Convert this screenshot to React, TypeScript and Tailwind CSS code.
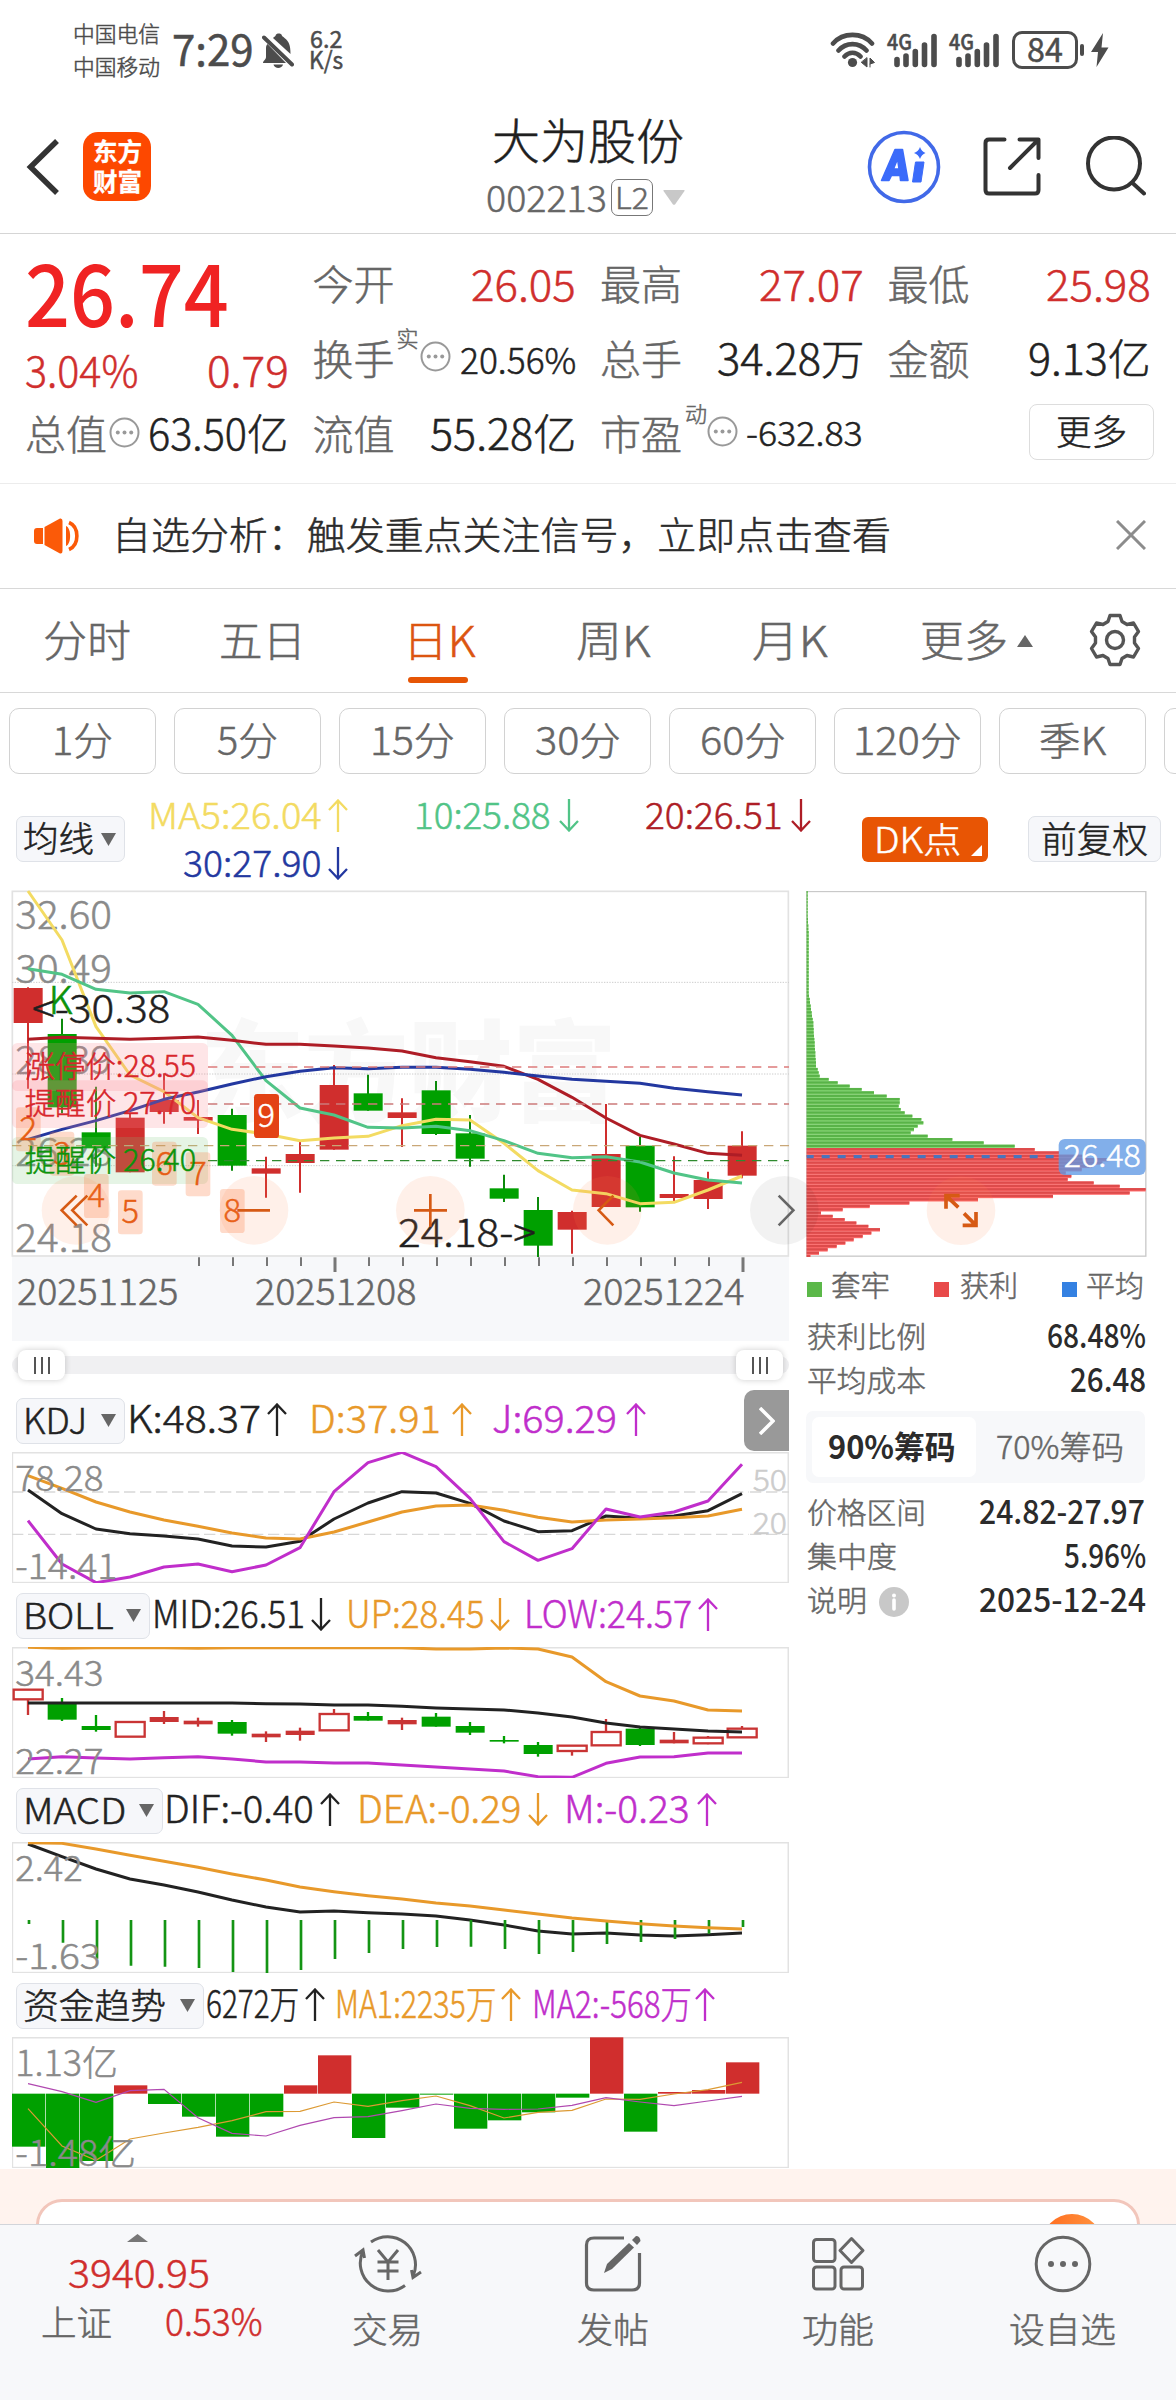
import { useLayoutEffect, useRef, useState, type ReactNode } from "react";

/* Single line of text that is condensed or expanded to the width of its box. */
function Fit({ className = "", children }: { className?: string; children: ReactNode }) {
  const box = useRef<HTMLSpanElement>(null);
  const text = useRef<HTMLSpanElement>(null);
  const [scale, setScale] = useState(1);
  useLayoutEffect(() => {
    if (box.current && text.current && text.current.offsetWidth) {
      setScale(box.current.offsetWidth / text.current.offsetWidth);
    }
  }, []);
  return (
    <span ref={box} className={"inline-block shrink-0 whitespace-nowrap leading-none " + className}>
      <span ref={text} className="inline-block origin-left" style={{ transform: `scaleX(${scale})` }}>
        {children}
      </span>
    </span>
  );
}

const RED = "#d02e2d";
const GREEN = "#00a000";
const DOWN_DARK = "#0b8a0b";
const ORANGE = "#e8992a";
const PURPLE = "#c02ecb";
const BLACK = "#222222";

const cx = (i: number) => 84 + 102 * i;
const line = (ys: number[]) => ys.map((y, i) => `${cx(i)},${y}`).join(" ");

function Dots() {
  return (
    <svg className="h-[31px] w-[31px] shrink-0" viewBox="0 0 31 31" fill="none" stroke="#999" strokeWidth="2">
      <circle cx="15.5" cy="15.5" r="14" />
      <g fill="#999" stroke="none">
        <circle cx="8.8" cy="15.5" r="2" />
        <circle cx="15.5" cy="15.5" r="2" />
        <circle cx="22.2" cy="15.5" r="2" />
      </g>
    </svg>
  );
}

function Arrow({ down = false, className = "" }: { down?: boolean; className?: string }) {
  return (
    <svg className={"h-[33px] w-[20px] shrink-0 " + className} viewBox="0 0 20 33" fill="none" stroke="currentColor" strokeWidth="2.3">
      {down ? <path d="M10 0V31.5M1 22L10 31.5L19 22" /> : <path d="M10 33V1.5M1 11L10 1.5L19 11" />}
    </svg>
  );
}

function Signal() {
  return (
    <span className="relative h-[35px] w-[51px] shrink-0">
      <Fit className="absolute left-0 top-[-4px] w-[25px] text-[22px] font-medium">4G</Fit>
      <svg className="absolute left-0 top-0 h-[35px] w-[51px]" viewBox="0 0 51 35" stroke="#4c4c4c" strokeWidth="5.6" strokeLinecap="round">
        <path d="M10 26.5V31.5M19 23V31.5M28.3 18.5V31.5M37.5 12V31.5M47 3.5V31.5" />
      </svg>
    </span>
  );
}

function StatusBar() {
  return (
    <div className="flex h-[100px] items-center pl-[73px] text-[#4c4c4c]">
      <div className="mt-[-4px] flex flex-col gap-[11px]">
        <Fit className="w-[87px] text-[22px]">中国电信</Fit>
        <Fit className="w-[87px] text-[22px]">中国移动</Fit>
      </div>
      <Fit className="ml-[12px] mt-[-6px] w-[82px] text-[43px] font-normal">7:29</Fit>
      <svg className="ml-[8px] h-[35px] w-[32px]" viewBox="0 0 32 35">
        <path d="M5.5 11 L24 30 H1 C1 27.5 4 27 4 24 V15 C4 13 4.500 12 5.500 11Z" fill="#4c4c4c" />
        <path d="M11 5 C12.500 3.500 13.500 3.400 14 1.500 C15 0 18.500 0 19.500 1.500 C20 3.500 21 3.500 22.500 5 C27 8.500 28.500 12 28.500 21Z" fill="#4c4c4c" />
        <path d="M2 4.500L30 31.500" stroke="#4c4c4c" strokeWidth="4" strokeLinecap="round" />
        <path d="M11.500 31.500H21C20 36 12.500 36 11.500 31.500Z" fill="#4c4c4c" />
      </svg>
      <div className="ml-[15px] mt-[-4px] flex flex-col items-center font-normal">
        <Fit className="w-[32px] text-[24px]">6.2</Fit>
        <Fit className="mt-[-3px] w-[34px] text-[24px]">K/s</Fit>
      </div>
      <svg className="ml-[487px] h-[38px] w-[46px]" viewBox="0 0 46 38" fill="none" stroke="#4c4c4c" strokeWidth="4.600" strokeLinecap="round">
        <path d="M3 12.500C13 1 32 1 42 12.500M8.500 19.500C16 11 29 11 36.500 19.500M14.500 25.500C19 20.500 26 20.500 30.500 25.500" />
        <circle cx="22.500" cy="31.500" r="4.600" fill="#4c4c4c" stroke="none" />
        <path d="M37 27V36L31.500 31.500ZM40 36V27L44.500 31.500L40 33" fill="#4c4c4c" strokeWidth="1" />
      </svg>
      <div className="ml-[11px] flex gap-[11px]">
        <Signal />
        <Signal />
      </div>
      <div className="ml-[12px] flex h-[38px] w-[66px] items-center justify-center rounded-[10px] border-[3px] border-[#4c4c4c]">
        <Fit className="mt-[-5px] w-[36px] text-[34px] font-normal">84</Fit>
      </div>
      <span className="ml-[2px] h-[12px] w-[4px] rounded-sm bg-[#4c4c4c]" />
      <svg className="ml-[7px] h-[34px] w-[18px]" viewBox="0 0 18 34" fill="#4c4c4c">
        <path d="M12 0L0 19H7L5.500 34L17.500 14.500H10.500Z" />
      </svg>
    </div>
  );
}

function Header() {
  return (
    <div className="flex h-[134px] border-b border-[#d5d5d5]">
      <svg className="ml-[26px] mt-[39px] h-[56px] w-[34px] shrink-0" viewBox="0 0 34 56" fill="none" stroke="#333" strokeWidth="5.500">
        <path d="M31 2L4.500 28L31 54" />
      </svg>
      <div className="ml-[23px] mt-[32px] flex h-[69px] w-[68px] shrink-0 flex-col items-center justify-center rounded-[15px] bg-[#fd4800] text-[25px] font-bold text-white [-webkit-text-stroke:0.3px]">
        <Fit className="mt-[-3px] w-[49px]">东方</Fit>
        <Fit className="mt-[5px] w-[49px]">财富</Fit>
      </div>
      <div className="ml-[334px] flex w-[203px] flex-col pt-[14px]">
        <Fit className="ml-[7px] w-[192px] text-[48px] text-[#1f1f1f]">大为股份</Fit>
        <div className="mt-[17px] flex items-center text-[#666]">
          <Fit className="ml-[1px] mt-[-2px] w-[121px] text-[37px]">002213</Fit>
          <span className="ml-[4px] flex h-[37px] w-[42px] items-center justify-center rounded-[7px] border border-[#777]">
            <Fit className="mt-[-4px] w-[34px] text-[30px]">L2</Fit>
          </span>
          <svg className="ml-[10px] h-[15px] w-[22px]" viewBox="0 0 22 15" fill="#c8c8c8">
            <path d="M1 0H21Q22 0 21.500 1L12 14.500Q11 15 10 14.500L0.500 1Q0 0 1 0Z" />
          </svg>
        </div>
      </div>
      <svg className="ml-[179px] mt-[30px] h-[74px] w-[74px] shrink-0" viewBox="0 0 74 74">
        <circle cx="37" cy="37" r="34.500" fill="none" stroke="#4169e8" strokeWidth="3.600" />
        <path d="M28 19.500H35.500L41 50.500H33.500L33 45.500H24.500L22 50.500H14.500ZM30.500 29L26.500 39H32Z" fill="#3b6bfa" stroke="#3b6bfa" strokeWidth="1.500" strokeLinejoin="round" fillRule="evenodd" />
        <path d="M48.500 32H57L54 52H45.500Z" fill="#3b6bfa" stroke="#3b6bfa" strokeLinejoin="round" />
        <path d="M53 17Q54.500 21.500 58.500 23Q54.500 24.500 53 29Q51.500 24.500 47 23Q51.500 21.500 53 17Z" fill="#3b6bfa" />
      </svg>
      <svg className="ml-[41px] mt-[36px] h-[60px] w-[60px] shrink-0" viewBox="0 0 60 60" fill="none" stroke="#333" strokeWidth="4" strokeLinecap="round" strokeLinejoin="round">
        <path d="M22.500 3.500H7Q3.500 3.500 3.500 7V54Q3.500 57.500 7 57.500H53Q56.500 57.500 56.500 54V39M37.500 3.500H56.500V22M56 4L28 32" />
      </svg>
      <svg className="ml-[44px] mt-[36px] h-[60px] w-[60px] shrink-0" viewBox="0 0 60 60" fill="none" stroke="#333" strokeWidth="4" strokeLinecap="round">
        <circle cx="28" cy="27.500" r="26" />
        <path d="M46.500 47L58 57.500" />
      </svg>
    </div>
  );
}

const cell = "flex h-[75px] items-center justify-between";
const label = "mt-[-3px] w-[82px] text-[41px] text-[#666]";
const high = "mt-[-3px] w-[105px] text-[43px] text-[#d02e2d]";

function Quote() {
  return (
    <div className="grid h-[250px] grid-cols-4 gap-6 border-b border-[#ececec] px-[25px] pt-[12px]">
      <div>
        <div className="flex h-[100px] items-center">
          <Fit className="mt-[-12px] w-[204px] text-[86px] font-medium text-[#f02323] [-webkit-text-stroke:0]">26.74</Fit>
        </div>
        <div className="flex h-[50px] items-center justify-between text-[43px] text-[#d02e2d]">
          <Fit className="mt-[-5px] w-[113px]">3.04%</Fit>
          <Fit className="mt-[-5px] w-[82px]">0.79</Fit>
        </div>
        <div className="flex h-[75px] items-center">
          <Fit className={label}>总值</Fit>
          <span className="ml-[2px] mt-[-3px]"><Dots /></span>
          <Fit className="ml-[8px] mt-[-3px] w-[140px] text-[42px] text-[#222]">63.50亿</Fit>
        </div>
      </div>
      <div>
        <div className={cell}>
          <Fit className={label}>今开</Fit>
          <Fit className={high}>26.05</Fit>
        </div>
        <div className="flex h-[75px] items-center">
          <Fit className={label}>换手</Fit>
          <Fit className="ml-[2px] mt-[5px] w-[22px] self-start text-[22px] text-[#666]">实</Fit>
          <span className="ml-[1px] mt-[-5px]"><Dots /></span>
          <Fit className="ml-[9px] mt-[-2px] w-[116px] text-[36px] text-[#222]">20.56%</Fit>
        </div>
        <div className={cell}>
          <Fit className={label}>流值</Fit>
          <Fit className="mt-[-3px] w-[146px] text-[42px] text-[#222]">55.28亿</Fit>
        </div>
      </div>
      <div>
        <div className={cell}>
          <Fit className={label}>最高</Fit>
          <Fit className={high}>27.07</Fit>
        </div>
        <div className={cell}>
          <Fit className={label}>总手</Fit>
          <Fit className="mt-[-3px] w-[147px] text-[42px] text-[#222]">34.28万</Fit>
        </div>
        <div className="flex h-[75px] items-center">
          <Fit className={label}>市盈</Fit>
          <Fit className="ml-[3px] mt-[5px] w-[22px] self-start text-[22px] text-[#666]">动</Fit>
          <span className="mt-[-4px]"><Dots /></span>
          <Fit className="ml-[8px] mt-[-3px] w-[117px] text-[34px] text-[#222]">-632.83</Fit>
        </div>
      </div>
      <div>
        <div className={cell}>
          <Fit className={label}>最低</Fit>
          <Fit className={high}>25.98</Fit>
        </div>
        <div className={cell}>
          <Fit className={label}>金额</Fit>
          <Fit className="mt-[-3px] w-[123px] text-[42px] text-[#222]">9.13亿</Fit>
        </div>
        <div className="flex h-[75px] items-center justify-end">
          <span className="mr-[-3px] mt-[-3px] flex h-[56px] w-[125px] items-center justify-center rounded-[8px] border border-[#ddd]">
            <Fit className="mt-[-5px] w-[71px] text-[35px] text-[#222]">更多</Fit>
          </span>
        </div>
      </div>
    </div>
  );
}

function Notice() {
  return (
    <div className="flex h-[105px] items-center border-b border-[#d8d8d8] pl-[33px]">
      <svg className="h-[36px] w-[46px]" viewBox="0 0 46 36" fill="#fb5a08">
        <path d="M4 10H10V26H4Q1 26 1 23V13Q1 10 4 10Z" />
        <path d="M11.500 9L27 0.500Q29.500 0 29.500 3V33Q29.500 36 27 35.500L11.500 27Z" />
        <path d="M33 8C38.500 10 38.500 26 33 28Z" />
        <path d="M36 4.500C46.500 9 46.500 27 36 31.500" fill="none" stroke="#fb5a08" strokeWidth="3.600" />
      </svg>
      <Fit className="ml-[33px] mt-[-6px] w-[779px] text-[38px] text-[#2b2b2b]">自选分析：触发重点关注信号，立即点击查看</Fit>
      <svg className="ml-[225px] mt-[-2px] h-[30px] w-[30px]" viewBox="0 0 30 30" stroke="#8c8c8c" strokeWidth="3">
        <path d="M1 1L29 29M29 1L1 29" />
      </svg>
    </div>
  );
}

function Tabs() {
  return (
    <div className="flex h-[104px] items-center border-b border-[#d8d8d8] pl-[43px] text-[43px] text-[#666]">
      <Fit className="mt-[-4px] w-[88px]">分时</Fit>
      <Fit className="ml-[88px] mt-[-4px] w-[87px]">五日</Fit>
      <div className="relative ml-[97px] mt-[-4px] text-[#dc5510]">
        <Fit className="w-[73px]">日K</Fit>
        <span className="absolute left-[5px] top-[71px] h-[6px] w-[60px] rounded-full bg-[#e65505]" />
      </div>
      <Fit className="ml-[100px] mt-[-4px] w-[75px]">周K</Fit>
      <Fit className="ml-[101px] mt-[-4px] w-[76px]">月K</Fit>
      <Fit className="ml-[92px] mt-[-4px] w-[88px]">更多</Fit>
      <svg className="ml-[9px] h-[12px] w-[16px]" viewBox="0 0 16 12" fill="#666"><path d="M8 0L16 12H0Z" /></svg>
      <svg className="ml-[56px] mt-[-1px] h-[54px] w-[52px]" viewBox="0 0 52 54" fill="none" stroke="#555" strokeWidth="3.400" strokeLinejoin="round">
        <path d="M21 2.500H31L33 8.500L38 11.500L44.500 10L49.500 18.500L45.500 24V30L49.500 35.500L44.500 44L38 42.500L33 45.500L31 51.500H21L19 45.500L14 42.500L7.500 44L2.500 35.500L6.500 30V24L2.500 18.500L7.500 10L14 11.500L19 8.500Z" />
        <circle cx="26" cy="27" r="8.500" />
      </svg>
    </div>
  );
}

function Periods() {
  const b = "flex h-[66px] w-[147px] shrink-0 items-center justify-center rounded-[10px] border-[1.5px] border-[#d2d2d2]";
  return (
    <div className="flex h-[97px] gap-[18px] overflow-hidden pl-[9px] pt-[15px] text-[39px] text-[#666]">
      <div className={b}><Fit className="mt-[-5px] w-[61px]">1分</Fit></div>
      <div className={b}><Fit className="mt-[-5px] w-[61px]">5分</Fit></div>
      <div className={b}><Fit className="mt-[-5px] w-[85px]">15分</Fit></div>
      <div className={b}><Fit className="mt-[-5px] w-[86px]">30分</Fit></div>
      <div className={b}><Fit className="mt-[-5px] w-[86px]">60分</Fit></div>
      <div className={b}><Fit className="mt-[-5px] w-[109px]">120分</Fit></div>
      <div className={b}><Fit className="mt-[-5px] w-[67px]">季K</Fit></div>
      <div className={b} />
    </div>
  );
}

function Chip({ width, text, textWidth }: { width: string; text: string; textWidth: string }) {
  return (
    <span className={"flex h-[46px] shrink-0 items-center justify-between rounded-[7px] border-[1.5px] border-[#dfe2e8] bg-[#f6f7fa] pl-[6px] pr-[8px] " + width}>
      <Fit className={"mt-[-5px] text-[35px] text-[#222] " + textWidth}>{text}</Fit>
      <svg className="h-[13px] w-[15px]" viewBox="0 0 15 13" fill="#666"><path d="M0 0H15L7.500 13Z" /></svg>
    </span>
  );
}

function Averages() {
  return (
    <div className="flex h-[101px] pl-[16px] text-[36px]">
      <div className="pt-[26px]"><Chip width="w-[109px]" text="均线" textWidth="w-[71px]" /></div>
      <div className="ml-[23px] w-[690px] shrink-0 pt-[7px]">
        <div className="flex h-[38px] items-center">
          <Fit className="mt-[-7px] w-[174px] text-[#f3db62]">MA5:26.04</Fit>
          <Arrow className="ml-[6px] mt-[-2px] text-[#f3db62]" />
          <Fit className="ml-[66px] mt-[-7px] w-[137px] text-[#51c487]">10:25.88</Fit>
          <Arrow down className="ml-[8px] mt-[-2px] text-[#51c487]" />
          <Fit className="ml-[66px] mt-[-7px] w-[138px] text-[#ae1d26]">20:26.51</Fit>
          <Arrow down className="ml-[8px] mt-[-2px] text-[#ae1d26]" />
        </div>
        <div className="mt-[10px] flex h-[38px] items-center pl-[35px] text-[#2338a0]">
          <Fit className="mt-[-7px] w-[139px]">30:27.90</Fit>
          <Arrow down className="ml-[6px] mt-[-2px]" />
        </div>
      </div>
      <div className="relative ml-[24px] mt-[27px] flex h-[45px] w-[126px] shrink-0 items-center rounded-[6px] bg-[#e85504] pl-[12px] text-white">
        <Fit className="mt-[-5px] w-[87px] text-[35px]">DK点</Fit>
        <svg className="absolute bottom-[6px] right-[6px] h-[11px] w-[11px]" viewBox="0 0 11 11" fill="#fff"><path d="M11 0V11H0Z" /></svg>
      </div>
      <div className="ml-[40px] mt-[26px] flex h-[46px] w-[133px] shrink-0 items-center justify-center rounded-[7px] border-[1.5px] border-[#dfe2e8] bg-[#f6f7fa] text-[#222]">
        <Fit className="mt-[-5px] w-[107px] text-[36px]">前复权</Fit>
      </div>
    </div>
  );
}

/* top, bottom, high, low, rising */
type Candle = [number, number, number, number, boolean];
const candles: Candle[] = [
  [324, 429, 322, 626, true], [462, 682, 416, 700, false], [757, 805, 620, 860, false], [713, 877, 700, 877, true],
  [660, 696, 580, 731, true], [711, 722, 660, 762, true], [705, 857, 686, 872, false], [865, 881, 830, 953, true],
  [822, 849, 786, 938, true], [615, 809, 555, 809, true], [640, 692, 584, 692, false], [697, 714, 655, 801, true],
  [631, 762, 603, 765, false], [760, 836, 705, 860, false], [925, 956, 884, 966, false], [990, 1097, 951, 1131, false],
  [996, 1049, 992, 1121, true], [822, 981, 672, 981, true], [797, 982, 770, 995, false], [942, 954, 829, 963, true],
  [900, 957, 875, 987, true], [797, 887, 754, 895, true],
];
const ma5 = [33, 180, 440, 585, 635, 713, 748, 762, 782, 774, 769, 737, 718, 720, 790, 872, 930, 941, 971, 967, 930, 888];
const ma10 = [266, 283, 328, 339, 335, 373, 466, 602, 684, 705, 742, 744, 739, 752, 782, 820, 833, 830, 846, 879, 900, 909];
const ma20 = [478, 472, 475, 478, 475, 471, 481, 493, 493, 498, 504, 513, 533, 545, 559, 598, 652, 714, 766, 792, 820, 826];
const ma30 = [778, 748, 722, 692, 658, 636, 612, 590, 574, 563, 566, 562, 562, 568, 577, 588, 598, 604, 610, 625, 635, 645];
const marks: [string, number, number][] = [
  ["2", 48, 682], ["3", 149, 755], ["4", 252, 882], ["5", 354, 931], ["6", 456, 785], ["7", 557, 817], ["8", 660, 927],
];

function MainChart() {
  return (
    <svg className="relative z-10 block h-[366px] w-[777px] overflow-visible" viewBox="36 33 2331 1098">
      <rect x="37" y="34" width="2328" height="1094" fill="none" stroke="#e2e2e2" strokeWidth="5" />
      <text x="600" y="700" textLength="1250" lengthAdjust="spacingAndGlyphs" fontSize="330" fontWeight="900" fill="#f8f8f8">东方财富</text>
      <path d="M36 307H2367M36 582H2367M36 857H2367" stroke="#ccc" strokeWidth="3" strokeDasharray="4 4" />
      <g fontSize="118" fill="#8a8a8a" stroke="#8a8a8a" strokeWidth="1.500">
        <text x="46" y="147" textLength="290" lengthAdjust="spacingAndGlyphs">32.60</text>
        <text x="46" y="308" textLength="290" lengthAdjust="spacingAndGlyphs">30.49</text>
        <text x="46" y="582" textLength="290" lengthAdjust="spacingAndGlyphs">28.39</text>
        <text x="46" y="857" textLength="290" lengthAdjust="spacingAndGlyphs">26.28</text>
        <text x="46" y="1117" textLength="290" lengthAdjust="spacingAndGlyphs">24.18</text>
      </g>
      {candles.map(([t, b, h, l, up], i) => (
        <g key={i} fill={up ? RED : GREEN} stroke={up ? RED : DOWN_DARK}>
          <path d={`M${cx(i)} ${h}V${l}`} strokeWidth="6" />
          <rect x={cx(i) - 43} y={t} width="87" height={b - t} stroke="none" />
        </g>
      ))}
      <g fill="none" strokeWidth="9" strokeLinejoin="round">
        <polyline points={line(ma5)} stroke="#f3db62" />
        <polyline points={line(ma10)} stroke="#51c487" />
        <polyline points={line(ma20)} stroke="#ae1d26" />
        <polyline points={line(ma30)} stroke="#2338a0" />
      </g>
      <g strokeWidth="4" strokeDasharray="28 20" fill="none">
        <path d="M624 561H2367" stroke="#dd7b7b" />
        <path d="M624 672H2367" stroke="#cc7a7a" />
        <path d="M36 797H2367" stroke="#c9a777" />
        <path d="M624 842H2367" stroke="#2f8a2f" />
      </g>
      <rect x="36" y="489" width="588" height="144" rx="16" fill="#fa8a90" fillOpacity="0.22" />
      <rect x="36" y="601" width="588" height="143" rx="16" fill="#fa8a90" fillOpacity="0.22" />
      <rect x="36" y="771" width="588" height="141" rx="16" fill="#7cc97c" fillOpacity="0.2" />
      {marks.map(([n, x, y]) => (
        <g key={n}>
          <rect x={x} y={y} width="74" height="132" rx="10" fill="#fb7d43" fillOpacity="0.28" />
          <text x={x + 37} y={y + 99} textAnchor="middle" fontSize="98" fill="#e65d14" stroke="#e65d14" strokeWidth="1.500">{n}</text>
        </g>
      ))}
      <rect x="762" y="642" width="75" height="132" rx="10" fill="#e34214" />
      <text x="799" y="740" textAnchor="middle" fontSize="98" fill="#fff" stroke="#fff" strokeWidth="1.500">9</text>
      <g fontSize="90" fill="#d8262c" stroke="#d8262c" strokeWidth="1.500">
        <text x="74" y="590" textLength="514" lengthAdjust="spacingAndGlyphs">涨停价:28.55</text>
        <text x="74" y="702" textLength="514" lengthAdjust="spacingAndGlyphs">提醒价 27.70</text>
        <text x="74" y="873" textLength="514" lengthAdjust="spacingAndGlyphs" fill="#0b930b" stroke="#0b930b">提醒价 26.40</text>
      </g>
      <text x="146" y="401" fontSize="114" fill="#0b930b" stroke="#0b930b" strokeWidth="2">K</text>
      <g fontSize="118" fill="#1f1f1f" stroke="#1f1f1f" strokeWidth="1.500">
        <text x="96" y="430" textLength="415" lengthAdjust="spacingAndGlyphs">&lt;-30.38</text>
        <text x="1194" y="1102" textLength="414" lengthAdjust="spacingAndGlyphs">24.18-&gt;</text>
      </g>
      <g fill="#fb874a" fillOpacity="0.12">
        <circle cx="228" cy="991" r="103" />
        <circle cx="762" cy="991" r="103" />
        <circle cx="1291" cy="991" r="103" />
        <circle cx="1822" cy="991" r="103" />
        <circle cx="2353" cy="991" r="103" fill="#000" fillOpacity="0.05" />
      </g>
      <g fill="none" stroke="#d65a14" strokeWidth="8">
        <path d="M230 947L185 991L230 1036M262 947L217 991L262 1036" />
        <path d="M712 991H810M1242 991H1341M1291 942V1040" />
        <path d="M1840 947L1796 991L1840 1036" />
        <path d="M2336 947L2380 991L2336 1036" stroke="#666" />
      </g>
    </svg>
  );
}

function DateAxis() {
  return (
    <div className="h-[84px] w-[777px] bg-[#f7f8fa] text-[37px] text-[#666]">
      <svg className="block h-[16px] w-[777px]" viewBox="36 0 2331 48" stroke="#777" strokeWidth="6">
        {candles.slice(5).map((_, i) => (
          <path key={i} d={`M${cx(i + 5) + 3} 1V${i === 4 || i === 16 ? 45 : 27}`} strokeWidth={i === 4 || i === 16 ? 9 : 6} />
        ))}
      </svg>
      <div className="mt-[-2px] flex pl-[5px]">
        <Fit className="w-[161px]">20251125</Fit>
        <Fit className="ml-[77px] w-[161px]">20251208</Fit>
        <Fit className="ml-[167px] w-[161px]">20251224</Fit>
      </div>
    </div>
  );
}

function Handle() {
  return (
    <span className="flex h-[30px] w-[47px] items-center justify-center gap-[5px] rounded-[8px] bg-white shadow-[0_0_6px_rgba(0,0,0,0.2)]">
      <i className="h-[17px] w-[2px] bg-[#555]" />
      <i className="h-[17px] w-[2px] bg-[#555]" />
      <i className="h-[17px] w-[2px] bg-[#555]" />
    </span>
  );
}

function Frame({ children }: { children: ReactNode }) {
  return (
    <svg className="block h-[131px] w-[777px]" viewBox="36 0 2331 393">
      <rect x="37" y="2" width="2328" height="390" fill="none" stroke="#e2e2e2" strokeWidth="5" />
      {children}
    </svg>
  );
}

function ScaleText({ y, width, children }: { y: number; width: number; children: ReactNode }) {
  return (
    <text x="46" y={y} textLength={width} lengthAdjust="spacingAndGlyphs" fontSize="107" fill="#8a8a8a" stroke="#8a8a8a" strokeWidth="1.500">{children}</text>
  );
}

const jLine = [572, 702, 758, 741, 711, 702, 725, 705, 653, 485, 398, 367, 410, 505, 635, 691, 656, 537, 561, 546, 513, 403];
const kLine = [480, 551, 597, 611, 618, 627, 648, 651, 634, 567, 519, 485, 489, 520, 573, 605, 602, 558, 565, 558, 542, 491];
const dLine = [437, 475, 516, 546, 570, 589, 609, 624, 627, 606, 576, 546, 528, 525, 541, 562, 576, 570, 567, 563, 558, 538];

function Kdj() {
  return (
    <Frame>
      <g transform="translate(0 -366)">
        <path d="M36 486H2246M36 613H2246" stroke="#d8d8d8" strokeWidth="4" strokeDasharray="34 14" />
        <path d="M2250 486H2367M2250 613H2367" stroke="#d8d8d8" strokeWidth="4" strokeDasharray="34 14" />
        <g fontSize="88" fill="#ccc" stroke="#ccc" strokeWidth="1.500">
          <text x="2258" y="484" textLength="103" lengthAdjust="spacingAndGlyphs">50</text>
          <text x="2258" y="611" textLength="103" lengthAdjust="spacingAndGlyphs">20</text>
        </g>
        <g fill="none" strokeWidth="9" strokeLinejoin="round">
          <polyline points={line(kLine)} stroke={BLACK} />
          <polyline points={line(dLine)} stroke={ORANGE} />
          <polyline points={line(jLine)} stroke={PURPLE} />
        </g>
        <ScaleText y={483} width={264}>78.28</ScaleText>
        <ScaleText y={746} width={306}>-14.41</ScaleText>
      </g>
    </Frame>
  );
}

const bollUp = [952, 955, 953, 953, 953, 955, 953, 953, 953, 953, 953, 953, 957, 957, 954, 957, 981, 1055, 1098, 1113, 1140, 1143];
const bollMid = [1119, 1119, 1119, 1119, 1119, 1119, 1119, 1121, 1122, 1125, 1125, 1129, 1134, 1137, 1140, 1149, 1161, 1179, 1191, 1197, 1203, 1206];
const bollLow = [1287, 1280, 1284, 1287, 1283, 1280, 1287, 1296, 1296, 1299, 1299, 1305, 1311, 1317, 1323, 1340, 1342, 1300, 1281, 1280, 1269, 1269];
const bollCandles: Candle[] = [
  [1079, 1108, 1079, 1155, true], [1117, 1169, 1104, 1173, false], [1188, 1200, 1155, 1205, false], [1176, 1220, 1176, 1220, true],
  [1161, 1176, 1143, 1182, true], [1172, 1183, 1163, 1190, true], [1176, 1211, 1170, 1217, false], [1211, 1222, 1204, 1236, true],
  [1202, 1215, 1193, 1232, true], [1152, 1201, 1137, 1201, true], [1158, 1172, 1146, 1172, false], [1170, 1183, 1163, 1200, true],
  [1160, 1190, 1149, 1190, false], [1188, 1208, 1176, 1215, false], [1230, 1235, 1218, 1240, false], [1245, 1272, 1236, 1280, false],
  [1247, 1263, 1247, 1277, true], [1206, 1246, 1167, 1246, true], [1196, 1245, 1192, 1248, false], [1229, 1240, 1206, 1240, true],
  [1223, 1240, 1218, 1243, true], [1196, 1222, 1188, 1222, true],
];

function Boll() {
  return (
    <Frame>
      <g transform="translate(0 -951)">
        {bollCandles.map(([t, b, h, l, up], i) => {
          const hollow = up && b - t > 15.5;
          const color = up ? "#c93434" : GREEN;
          return (
            <g key={i} stroke={color} strokeWidth="7">
              <path d={hollow ? `M${cx(i)} ${h}V${t}M${cx(i)} ${b}V${l}` : `M${cx(i)} ${h}V${l}`} />
              {hollow ? (
                <rect x={cx(i) - 43} y={t} width="87" height={b - t} fill="#fff" />
              ) : (
                <rect x={cx(i) - 43} y={t} width="87" height={b - t} fill={color} stroke="none" />
              )}
            </g>
          );
        })}
        <g fill="none" strokeWidth="9" strokeLinejoin="round">
          <polyline points={line(bollMid)} stroke={BLACK} />
          <polyline points={line(bollUp)} stroke={ORANGE} />
          <polyline points={line(bollLow)} stroke={PURPLE} />
        </g>
        <ScaleText y={1067} width={264}>34.43</ScaleText>
        <ScaleText y={1331} width={264}>22.27</ScaleText>
      </g>
    </Frame>
  );
}

const dea = [248, 250, 267, 286, 304, 322, 342, 360, 381, 395, 407, 417, 429, 438, 450, 462, 474, 483, 491, 498, 503, 507];
const dif = [252, 290, 327, 357, 375, 396, 420, 441, 456, 453, 458, 462, 468, 480, 495, 513, 522, 519, 525, 528, 524, 519];
const macdBars = [492, 548, 596, 617, 620, 624, 636, 639, 630, 597, 579, 567, 561, 560, 567, 582, 576, 552, 546, 537, 521, 501];

function Macd() {
  return (
    <Frame>
      <g transform="translate(0 -246)">
        <polyline points={line(dif)} fill="none" stroke={BLACK} strokeWidth="9" />
        <path d={macdBars.map((y, i) => `M${cx(i) + 3} 480V${y}`).join("")} stroke="#149414" strokeWidth="8" />
        <polyline points={line(dea)} fill="none" stroke={ORANGE} strokeWidth="9" />
        <ScaleText y={363} width={202}>2.42</ScaleText>
        <ScaleText y={628} width={256}>-1.63</ScaleText>
      </g>
    </Frame>
  );
}

const flows = [1160, 1224, 1203, 976, 1032, 1070, 1130, 1070, 976, 886, 1134, 1043, 1004, 1106, 1081, 1057, 1013, 832, 1115, 996, 990, 907];
const flowMa1 = [1046, 1158, 1201, 1137, 1119, 1102, 1082, 1055, 1054, 1026, 1039, 1022, 1008, 1037, 1074, 1057, 1051, 1017, 1018, 1002, 989, 967];
const flowMa2 = [971, 995, 1027, 992, 988, 1073, 1120, 1128, 1096, 1073, 1070, 1052, 1032, 1045, 1048, 1047, 1036, 1013, 1026, 1037, 1023, 1009];

function Funds() {
  return (
    <Frame>
      <g transform="translate(0 -831)">
        {flows.map((y, i) => (
          <rect key={i} x={36 + 102 * i} y={Math.min(y, 1001)} width="100" height={Math.abs(y - 1001)} fill={y < 1001 ? RED : GREEN} />
        ))}
        <polyline points={line(flowMa1)} fill="none" stroke="#dc9a34" strokeWidth="3.500" />
        <polyline points={line(flowMa2)} fill="none" stroke="#b049b0" strokeWidth="3.500" />
        <ScaleText y={947} width={308}>1.13亿</ScaleText>
        <ScaleText y={1217} width={362}>-1.48亿</ScaleText>
      </g>
    </Frame>
  );
}

const ind = "flex h-[64px] items-center pl-[4px] text-[38px] pt-[1px]";
const o = "text-[#e8992a]";
const p = "text-[#c02ecb]";
const k = "text-[#222]";

function Indicators() {
  return (
    <div>
      <div className={ind + " relative"}>
        <Chip width="w-[109px]" text="KDJ" textWidth="w-[64px]" />
        <Fit className={"ml-[2px] mt-[-7px] w-[134px] " + k}>K:48.37</Fit><Arrow className={"ml-[6px] mt-[-3px] " + k} />
        <Fit className={"ml-[22px] mt-[-7px] w-[132px] " + o}>D:37.91</Fit><Arrow className={"ml-[11px] mt-[-3px] " + o} />
        <Fit className={"ml-[20px] mt-[-7px] w-[125px] " + p}>J:69.29</Fit><Arrow className={"ml-[9px] mt-[-3px] " + p} />
        <div className="absolute right-0 top-[2px] flex h-[61px] w-[45px] items-center justify-center rounded-l-[10px] bg-[#999]">
          <svg className="h-[28px] w-[16px]" viewBox="0 0 16 28" fill="none" stroke="#fff" strokeWidth="3.500"><path d="M1 1L14 14L1 27" /></svg>
        </div>
      </div>
      <Kdj />
      <div className={ind}>
        <Chip width="w-[134px]" text="BOLL" textWidth="w-[90px]" />
        <Fit className={"ml-[2px] mt-[-7px] w-[153px] " + k}>MID:26.51</Fit><Arrow down className={"ml-[6px] mt-[-3px] " + k} />
        <Fit className={"ml-[15px] mt-[-7px] w-[138px] " + o}>UP:28.45</Fit><Arrow down className={"ml-[6px] mt-[-3px] " + o} />
        <Fit className={"ml-[14px] mt-[-7px] w-[168px] " + p}>LOW:24.57</Fit><Arrow className={"ml-[6px] mt-[-3px] " + p} />
      </div>
      <Boll />
      <div className={ind}>
        <Chip width="w-[147px]" text="MACD" textWidth="w-[103px]" />
        <Fit className={"ml-[1px] mt-[-7px] w-[150px] " + k}>DIF:-0.40</Fit><Arrow className={"ml-[6px] mt-[-3px] " + k} />
        <Fit className={"ml-[17px] mt-[-7px] w-[164px] " + o}>DEA:-0.29</Fit><Arrow down className={"ml-[7px] mt-[-3px] " + o} />
        <Fit className={"ml-[16px] mt-[-7px] w-[126px] " + p}>M:-0.23</Fit><Arrow className={"ml-[7px] mt-[-3px] " + p} />
      </div>
      <Macd />
      <div className={ind}>
        <Chip width="w-[188px]" text="资金趋势" textWidth="w-[143px]" />
        <Fit className={"ml-[2px] mt-[-7px] w-[93px] " + k}>6272万</Fit><Arrow className={"ml-[6px] mt-[-3px] " + k} />
        <Fit className={"ml-[10px] mt-[-7px] w-[161px] " + o}>MA1:2235万</Fit><Arrow className={"ml-[5px] mt-[-3px] " + o} />
        <Fit className={"ml-[11px] mt-[-7px] w-[160px] " + p}>MA2:-568万</Fit><Arrow className={"ml-[3px] mt-[-3px] " + p} />
      </div>
      <Funds />
    </div>
  );
}

const chips = [
  3, 3, 3, 3, 3, 3, 3, 3, 4, 4, 5, 5, 6, 6, 6, 6, 6, 6, 6, 6, 6, 6, 6, 6, 6, 6, 6, 6, 6, 6, 6, 7, 9, 10, 12, 13, 15, 16, 18,
  20, 20, 21, 21, 22, 23, 24, 24, 25, 26, 26, 27, 28, 28, 33, 36, 39, 66, 93, 129, 165, 202, 240, 279, 279, 276, 282, 294, 317,
  344, 350, 333, 322, 312, 363, 437, 531, 624, 684, 757, 830, 905, 887, 855, 825, 777, 794, 783, 861, 939, 1017, 969, 739, 514,
  308, 189, 108, 43, 78, 114, 149, 185, 220, 194, 168, 141, 116, 90, 63, 37, 11,
];

function ChipChart() {
  const top = (i: number) => 276 + (i - 0.3) * 10.015;
  return (
    <svg className="block h-[366px] w-[341px]" viewBox="49 273 1023 1098">
      <rect x="50.500" y="274.500" width="1018" height="1094" fill="none" stroke="#c9c9c9" strokeWidth="4" />
      {chips.map((w, i) => (
        <g key={i}>
          <rect x="51" y={top(i)} width={w} height="10.100" fill={i < 77 ? "#89d877" : "#ff6c6c"} />
          <rect x="51" y={top(i)} width={w} height="7" fill={i < 77 ? "#59b348" : "#dd4b4b"} />
        </g>
      ))}
      <path d="M51 1070H807" stroke="#4a74bd" strokeWidth="10" strokeDasharray="24 24" strokeDashoffset="3" />
      <rect x="807" y="1017" width="261" height="108" rx="18" fill="#5f98e4" fillOpacity="0.78" />
      <text x="822" y="1101" textLength="231" lengthAdjust="spacingAndGlyphs" fontSize="93" fill="#fff" stroke="#fff" strokeWidth="1.500">26.48</text>
      <circle cx="514" cy="1232" r="103" fill="#fb874a" fillOpacity="0.12" />
      <path d="M510 1187H469V1226M469 1187L506 1222M559 1236V1276H519M559 1276L523 1240" fill="none" stroke="#d65a14" strokeWidth="11" />
    </svg>
  );
}

const name = "mt-[-3px] text-[29px] text-[#666]";
const num = "mt-[-5px] text-[33px] font-medium text-[#2b2b2b] [-webkit-text-stroke:0]";
const stat = "flex h-[44px] items-center justify-between";

function ChipPanel() {
  return (
    <div className="w-[341px]">
      <ChipChart />
      <div className="flex h-[58px] items-center">
        <i className="ml-[1px] mt-[6px] h-[15px] w-[15px] bg-[#5bb849]" />
        <Fit className={"ml-[9px] w-[59px] " + name}>套牢</Fit>
        <i className="ml-[44px] mt-[6px] h-[15px] w-[15px] bg-[#e84a4a]" />
        <Fit className={"ml-[11px] w-[58px] " + name}>获利</Fit>
        <i className="ml-[44px] mt-[6px] h-[15px] w-[15px] bg-[#3481e2]" />
        <Fit className={"ml-[9px] w-[58px] " + name}>平均</Fit>
      </div>
      <div className={stat}><Fit className={"ml-[1px] w-[119px] " + name}>获利比例</Fit><Fit className={"mr-px w-[99px] " + num}>68.48%</Fit></div>
      <div className={stat}><Fit className={"ml-[1px] w-[119px] " + name}>平均成本</Fit><Fit className={"mr-px w-[76px] " + num}>26.48</Fit></div>
      <div className="mb-[8px] mt-[8px] flex h-[72px] w-[339px] rounded-[7px] bg-[#f7f8fa] p-[6px]">
        <div className="flex w-[164px] items-center justify-center rounded-[7px] bg-white">
          <Fit className="ml-[-4px] mt-[-4px] w-[128px] text-[32px] font-bold text-[#2b2b2b] [-webkit-text-stroke:0]">90%筹码</Fit>
        </div>
        <div className="flex flex-1 items-center justify-center">
          <Fit className="ml-[5px] mt-[-4px] w-[128px] text-[32px] text-[#666]">70%筹码</Fit>
        </div>
      </div>
      <div className={stat}><Fit className={"ml-[1px] w-[119px] " + name}>价格区间</Fit><Fit className={"mr-[2px] w-[166px] " + num}>24.82-27.97</Fit></div>
      <div className={stat}><Fit className={"ml-[1px] w-[90px] " + name}>集中度</Fit><Fit className={"mr-px w-[82px] " + num}>5.96%</Fit></div>
      <div className="flex h-[44px] items-center">
        <Fit className={"ml-[1px] w-[60px] " + name}>说明</Fit>
        <svg className="ml-[12px] mt-[1px] h-[30px] w-[30px]" viewBox="0 0 30 30">
          <circle cx="15" cy="15" r="15" fill="#c8c8c8" />
          <circle cx="15" cy="8.500" r="2" fill="#fff" />
          <path d="M15 13V22" stroke="#fff" strokeWidth="3.600" strokeLinecap="round" />
        </svg>
        <Fit className={"ml-auto mr-px w-[167px] " + num}>2025-12-24</Fit>
      </div>
    </div>
  );
}

const nav = "flex flex-col items-center pt-[8px] text-[35px] text-[#666]";

function BottomBar() {
  return (
    <div className="relative flex h-[176px] border-t border-[#d2d5da] bg-[#f7f8fa]">
      <div className="flex w-[275px] flex-col items-center pt-[9px]">
        <svg className="h-[8px] w-[21px]" viewBox="0 0 21 8" fill="#777"><path d="M10.500 0L21 8H0Z" /></svg>
        <Fit className="ml-[2px] mt-[10px] w-[142px] text-[39px] text-[#d02e2d]">3940.95</Fit>
        <div className="mt-[10px] flex items-center pl-[28px]">
          <Fit className="w-[71px] text-[35px] text-[#666]">上证</Fit>
          <Fit className="ml-[53px] w-[98px] text-[38px] text-[#d02e2d]">0.53%</Fit>
        </div>
      </div>
      <div className={nav + " w-[225px]"}>
        <svg className="h-[62px] w-[68px]" viewBox="0 0 68 62" fill="none" stroke="#666" strokeWidth="3">
          <path d="M17 9A28 28 0 0 1 59.500 42M51 52.500A28 28 0 0 1 9 18M1 23L9 17L10.500 25M67 39L59 44.500L57.500 37" />
          <path d="M24 17L34 29L44 17M34 29V47M23.500 29H44.500M23.500 38H44.500" />
        </svg>
        <Fit className="mt-[15px] w-[71px]">交易</Fit>
      </div>
      <div className={nav + " w-[226px]"}>
        <svg className="h-[62px] w-[60px]" viewBox="0 0 60 62" fill="none" stroke="#666" strokeWidth="3.200">
          <path d="M41 5H11Q3.500 5 3.500 12V50Q3.500 57 11 57H49Q56.500 57 56.500 50V20" />
          <path d="M21 40L24 31L46 10L51 14.500L29 36Z" fill="#666" stroke="none" />
          <path d="M49 7L53 3Q57 3 57.500 8L54 12Z" fill="#666" stroke="none" />
        </svg>
        <Fit className="mt-[15px] w-[72px]">发帖</Fit>
      </div>
      <div className={nav + " w-[224px]"}>
        <svg className="h-[62px] w-[56px]" viewBox="0 0 56 62" fill="none" stroke="#666" strokeWidth="3" strokeLinejoin="round">
          <rect x="3.500" y="6.500" width="21.500" height="22" rx="3" />
          <rect x="3.500" y="34" width="21.500" height="22" rx="3" />
          <rect x="31" y="34" width="21.500" height="22" rx="3" />
          <path d="M41.500 5.500L53 17.500L41.500 29.500L30 17.500Z" />
        </svg>
        <Fit className="mt-[15px] w-[72px]">功能</Fit>
      </div>
      <div className={nav + " w-[225px]"}>
        <svg className="h-[62px] w-[60px]" viewBox="0 0 60 62" fill="#666">
          <circle cx="30" cy="31" r="26.800" fill="none" stroke="#666" strokeWidth="3" />
          <circle cx="18" cy="31" r="3" />
          <circle cx="30" cy="31" r="3" />
          <circle cx="42" cy="31" r="3" />
        </svg>
        <Fit className="mt-[15px] w-[107px]">设自选</Fit>
      </div>
    </div>
  );
}

export default function App() {
  return (
    <div className="h-[2400px] w-[1176px] overflow-hidden bg-white font-['Noto_Sans_CJK_SC',sans-serif] font-light [-webkit-text-stroke:0.5px]">
      <StatusBar />
      <Header />
      <Quote />
      <Notice />
      <Tabs />
      <Periods />
      <Averages />
      <div className="flex h-[1278px] pl-[12px]">
        <div className="w-[777px]">
          <MainChart />
          <DateAxis />
          <div className="mb-[8px] mt-[9px] flex h-[30px] items-center">
            <div className="flex h-[18px] flex-1 items-center justify-between rounded-full bg-[#f0f0f2] px-[6px]">
              <Handle />
              <Handle />
            </div>
          </div>
          <Indicators />
        </div>
        <div className="ml-[17px]"><ChipPanel /></div>
      </div>
      <div className="h-[55px] overflow-hidden bg-[#fff3ee] px-[36px] pt-[30px]">
        <div className="flex h-[100px] justify-end rounded-[26px] border-[3px] border-[#f2c6bb] bg-white pr-[35px] pt-[12px]">
          <span className="h-[60px] w-[60px] rounded-full bg-gradient-to-r from-[#ff6a1c] to-[#ff9440]" />
        </div>
      </div>
      <BottomBar />
    </div>
  );
}
